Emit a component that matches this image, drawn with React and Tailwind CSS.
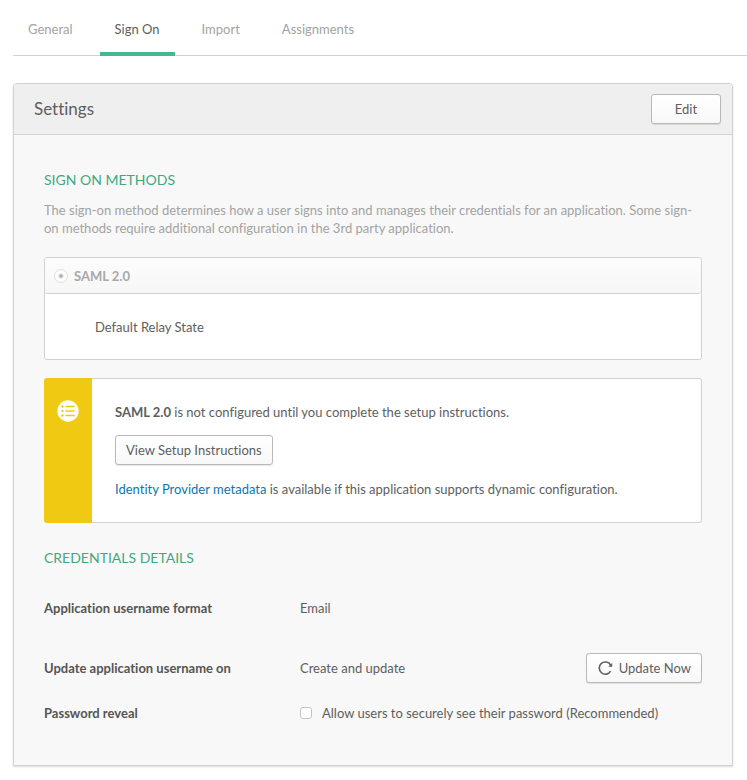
import { useState } from 'react';
import clsx from 'clsx';

const TABS = ['General', 'Sign On', 'Import', 'Assignments'];

// Shared grey button
const Button = ({ className, children, ...props }) => {
  return (
    <button
      type="button"
      className={clsx(
        'h-[30px] flex items-center justify-center rounded-[3px] border border-[#b9b9b9] bg-gradient-to-b from-white to-[#f8f8f8] shadow-[0_1px_1px_rgba(0,0,0,0.1)] hover:border-[#999999]',
        className
      )}
      {...props}
    >
      {children}
    </button>
  );
};

const ListIcon = () => {
  return (
    <svg width="22" height="22" viewBox="0 0 22 22" aria-hidden="true">
      <circle cx="11" cy="11" r="10.7" fill="#fff" />
      <g fill="#f0c913">
        <circle cx="5.5" cy="6.5" r="1.2" />
        <circle cx="5.5" cy="11" r="1.2" />
        <circle cx="5.5" cy="15.5" r="1.2" />
      </g>
      <path
        d="M9 6.5h8M9 11h8M9 15.5h8"
        stroke="#f0c913"
        strokeWidth="1.5"
        strokeLinecap="round"
      />
    </svg>
  );
};

const RefreshIcon = () => {
  return (
    <svg width="16" height="16" viewBox="0 0 16 16" fill="none" aria-hidden="true">
      <path d="M13.6 5A6.1 6.1 0 1 0 13.6 11.2" stroke="#5e5e5e" strokeWidth="1.6" />
      <path d="M15.2 3V6.8H11.2Z" fill="#5e5e5e" />
    </svg>
  );
};

const Row = ({ label, htmlFor, children }) => {
  return (
    <div className="flex items-center min-h-[30px]">
      <div className="w-64 shrink-0 font-bold text-[#555555]">
        {htmlFor ? <label htmlFor={htmlFor}>{label}</label> : label}
      </div>
      <div className="flex-1 flex items-center justify-between">{children}</div>
    </div>
  );
};

export default function App() {
  const [activeTab, setActiveTab] = useState('Sign On');
  const [reveal, setReveal] = useState(false);

  return (
    <div className="min-h-screen bg-white pl-[13px] pb-3 font-['Lato',sans-serif] [font-variant-ligatures:none] text-[13px] leading-[18px] text-[#5e5e5e]">
      {/* Tabs */}
      <nav className="flex gap-3 border-b border-[#d2d2d2]">
        {TABS.map((tab) => (
          <button
            key={tab}
            type="button"
            onClick={() => setActiveTab(tab)}
            className={clsx(
              '-mb-px h-14 px-[15px] pt-[6px] border-b-4',
              activeTab === tab
                ? 'border-[#46b890] text-[#5e5e5e]'
                : 'border-transparent text-[#a3a3a3] hover:text-[#5e5e5e]'
            )}
          >
            {tab}
          </button>
        ))}
      </nav>

      {/* Settings panel */}
      <section className="mt-[27px] mr-[14px] rounded-t-[4px] border border-[#d2d2d2] bg-[#f8f8f8] shadow-[0_1px_2px_rgba(0,0,0,0.15)]">
        <header className="flex items-center justify-between h-[51px] pl-5 pr-[11px] rounded-t-[3px] border-b border-[#d2d2d2] bg-[#efefef]">
          <h1 className="text-[17px]">Settings</h1>
          <Button className="w-[70px]">Edit</Button>
        </header>

        <div className="px-[30px] pt-9 pb-[37px]">
          <h2 className="text-sm leading-[18px] text-[#3fa882]">SIGN ON METHODS</h2>
          <p className="mt-3 text-[#a3a3a3]">
            The sign-on method determines how a user signs into and manages their credentials for an
            application. Some sign-on methods require additional configuration in the 3rd party
            application.
          </p>

          <div className="mt-5 rounded-[3px] border border-[#d2d2d2] bg-white">
            <label className="flex items-center gap-[6px] h-9 px-[9px] rounded-[3px] border-b border-[#d2d2d2] bg-gradient-to-b from-[#fcfcfc] to-[#f7f7f7] font-bold text-[#a8a8a8]">
              <input
                type="radio"
                name="method"
                defaultChecked
                disabled
                className="appearance-none size-[14px] rounded-full border border-[#e0e0e0] bg-[radial-gradient(circle,#b0b0b0_1px,#fcfcfc_3px)]"
              />
              SAML 2.0
            </label>
            <div className="px-[50px] pt-6 pb-[23px]">Default Relay State</div>
          </div>

          <div className="mt-[18px] flex">
            <div className="w-12 shrink-0 flex justify-center pt-[22px] rounded-l-[3px] bg-[#f0c913]">
              <ListIcon />
            </div>
            <div className="flex-1 pl-[23px] pr-5 py-6 rounded-r-[3px] border border-l-0 border-[#d2d2d2] bg-white">
              <p>
                <strong className="font-bold">SAML 2.0</strong> is not configured until you complete
                the setup instructions.
              </p>
              <Button className="mt-[14px] mb-[15px] px-[10px]">View Setup Instructions</Button>
              <p>
                <a href="#metadata" className="text-[#0b76b0] hover:underline">
                  Identity Provider metadata
                </a>{' '}
                is available if this application supports dynamic configuration.
              </p>
            </div>
          </div>

          <h2 className="mt-[26px] text-sm leading-[18px] text-[#3fa882]">CREDENTIALS DETAILS</h2>
          <div className="mt-[26px]">
            <Row label="Application username format">Email</Row>
            <div className="mt-[30px] mb-[15px]">
              <Row label="Update application username on">
                Create and update
                <Button className="gap-[6px] px-[10px]">
                  <RefreshIcon />
                  Update Now
                </Button>
              </Row>
            </div>
            <Row label="Password reveal" htmlFor="reveal">
              <label className="flex items-center gap-[10px]">
                <input
                  id="reveal"
                  type="checkbox"
                  checked={reveal}
                  onChange={(e) => setReveal(e.target.checked)}
                  className="appearance-none size-3 rounded-[3px] border border-[#c4c4c4] bg-white checked:bg-[#46b890]"
                />
                Allow users to securely see their password (Recommended)
              </label>
            </Row>
          </div>
        </div>
      </section>
    </div>
  );
}
